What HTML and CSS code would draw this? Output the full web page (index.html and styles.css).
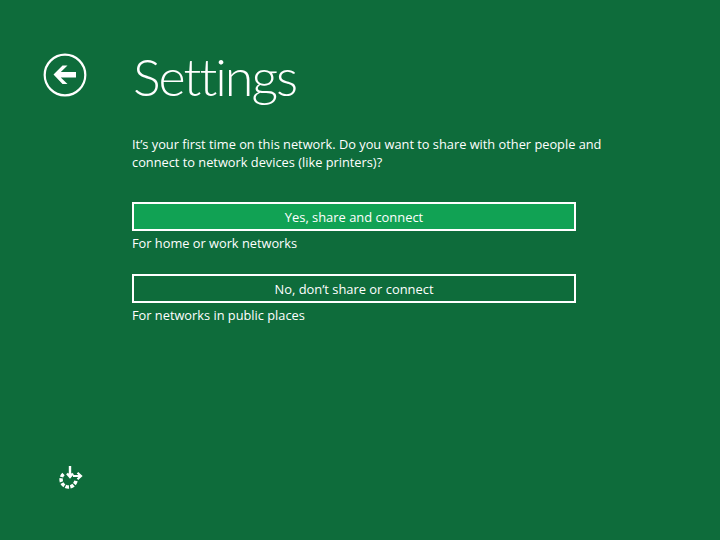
FILE: index.html
```html
<!DOCTYPE html>
<html lang="en">
<head>
  <meta charset="UTF-8">
  <title>Settings</title>
  <link rel="stylesheet" href="styles.css">
</head>
<body>

<div class="side">
  <button type="button" class="back" aria-label="Back">
    <svg width="44" height="44" viewBox="0 0 44 44">
      <circle cx="22" cy="22" r="20.3" fill="none" stroke="#fff" stroke-width="2.2"/>
      <path d="M10.5 21.5 L19.5 12.5 H24.5 L17.8 19 H33 V24.5 H17.8 L24.5 31 H19.5 Z" fill="#fff"/>
    </svg>
  </button>
  <div class="access">
    <svg width="26" height="25" viewBox="0 0 26 25">
      <path d="M5.5 10 A7.5 7.5 0 1 0 18 16.5" fill="none" stroke="#fff" stroke-width="3.5" stroke-dasharray="3.6 1.3"/>
      <path d="M12 2 V13 M9 9.5 L12 13 L15 9.5" fill="none" stroke="#fff" stroke-width="2.4"/>
      <path d="M15 12 H22 M19.5 8.8 L23 12 L19.5 15.2" fill="none" stroke="#fff" stroke-width="2.2"/>
    </svg>
  </div>
</div>

<main class="content">
  <h1>Settings</h1>
  <p class="intro">It’s your first time on this network. Do you want to share with other people and connect to network devices (like printers)?</p>

  <div class="choice">
    <button type="button" class="btn btn-primary">Yes, share and connect</button>
    <div class="hint">For home or work networks</div>
  </div>

  <div class="choice">
    <button type="button" class="btn">No, don’t share or connect</button>
    <div class="hint">For networks in public places</div>
  </div>
</main>

</body>
</html>
```

FILE: styles.css
```css
* {
  box-sizing: border-box;
  margin: 0;
  padding: 0;
  font-family: 'Open Sans', 'Noto Sans', sans-serif;
}

body {
  display: flex;
  width: 720px;
  height: 540px;
  overflow: hidden;
  background-color: #0e6c3b;
  color: #fff;
}

.side {
  display: flex;
  flex-direction: column;
  justify-content: space-between;
  width: 132px;
  padding: 53px 0 51px 43px;
}

.back {
  width: 44px;
  height: 44px;
  background: none;
  border: none;
}

.back svg,
.access svg {
  display: block;
}

.access {
  margin-left: 15px;
}

.content {
  width: 475px;
  padding-top: 43px;
}

h1 {
  font-family: 'Lato', 'Open Sans', sans-serif;
  font-size: 52px;
  font-weight: 300;
  line-height: 66px;
  letter-spacing: -2px;
  margin-left: 1px;
}

.intro {
  margin-top: 26px;
  font-size: 12.8px;
  line-height: 18px;
}

.choice {
  width: 444px;
  margin-top: 31px;
}

.choice + .choice {
  margin-top: 22px;
}

.btn {
  display: block;
  width: 100%;
  height: 29px;
  background-color: #0e6c3b;
  border: 2px solid #fff;
  color: #fff;
  font-size: 12.9px;
  font-weight: 500;
  text-align: center;
}

.btn-primary {
  background-color: #11a254;
}

.hint {
  margin-top: 3px;
  font-size: 12.8px;
  line-height: 18px;
}
```
